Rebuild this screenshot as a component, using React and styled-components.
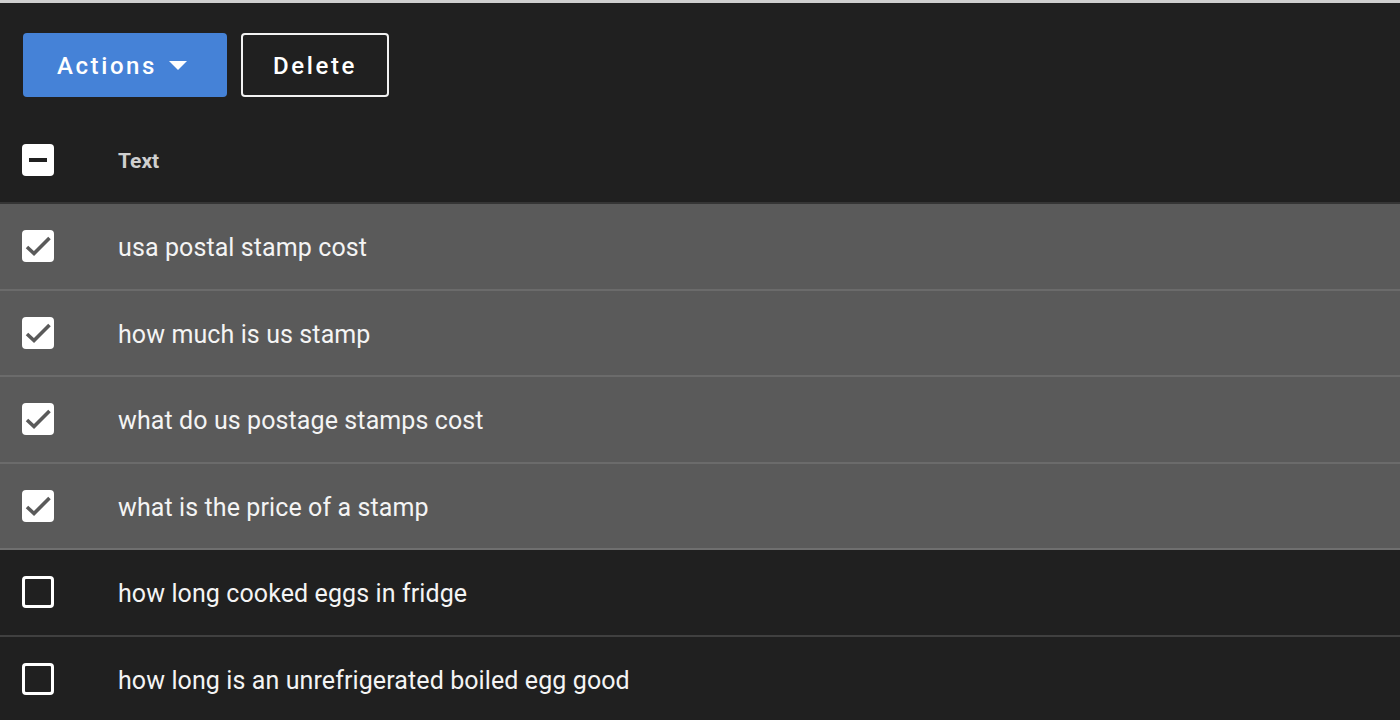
import React from 'react'
import styled, {createGlobalStyle} from 'styled-components'

const GlobalStyle = createGlobalStyle`
  html, body {
    margin: 0;
    padding: 0;
    background: #202020;
  }
  body {
    font-family: Roboto, "Noto Sans", "Liberation Sans", sans-serif;
    color: #fff;
  }
`

const rows = [
  {text: 'usa postal stamp cost', checked: true},
  {text: 'how much is us stamp', checked: true},
  {text: 'what do us postage stamps cost', checked: true},
  {text: 'what is the price of a stamp', checked: true},
  {text: 'how long cooked eggs in fridge', checked: false},
  {text: 'how long is an unrefrigerated boiled egg good', checked: false},
]

const Checkbox = ({state}) => {
  if (state === 'checked') {
    return (
      <Box $filled>
        <svg width='32' height='32' viewBox='0 0 32 32'>
          <path d='M5 17l7 6.5 15.5-15.5' fill='none' stroke='#5a5a5a' strokeWidth='3.6'/>
        </svg>
      </Box>
    )
  }
  if (state === 'indeterminate') {
    return (
      <Box $filled>
        <Dash/>
      </Box>
    )
  }
  return <Box/>
}

const App = () => {
  return (
    <Page>
      <GlobalStyle/>
      <Toolbar>
        <PrimaryButton type='button'>
          Actions
          <Caret/>
        </PrimaryButton>
        <OutlineButton type='button'>Delete</OutlineButton>
      </Toolbar>
      <Table>
        <HeaderRow>
          <CheckCell><Checkbox state='indeterminate'/></CheckCell>
          <HeaderLabel>Text</HeaderLabel>
        </HeaderRow>
        {rows.map((row, index) => {
          const nextChecked = rows[index + 1] && rows[index + 1].checked
          return (
            <Row key={index} $selected={row.checked} $edge={row.checked && !nextChecked}>
              <CheckCell><Checkbox state={row.checked ? 'checked' : 'empty'}/></CheckCell>
              <RowText>{row.text}</RowText>
            </Row>
          )
        })}
      </Table>
    </Page>
  )
}

const Page = styled.div `
  min-height: 720px;
  border-top: 3px solid #cfcfcf;
  background: #202020;
  box-sizing: border-box;
  overflow: hidden;
`

const Toolbar = styled.div `
  display: flex;
  align-items: center;
  gap: 14px;
  padding: 30px 23px 0;
  height: 64px;
`

const ButtonBase = styled.button `
  height: 64px;
  box-sizing: border-box;
  font-family: Roboto, "Liberation Sans", sans-serif;
  font-size: 24px;
  font-weight: 500;
  letter-spacing: 2.6px;
  color: #fff;
  border-radius: 4px;
  display: flex;
  align-items: center;
  justify-content: center;
  cursor: pointer;
  padding-top: 2px;
`

const PrimaryButton = styled(ButtonBase) `
  width: 204px;
  background: #4582d7;
  border: none;
  gap: 12px;
  padding-left: 0;
  padding-right: 6px;
`

const Caret = styled.span `
  width: 0;
  height: 0;
  border-left: 9.5px solid transparent;
  border-right: 9.5px solid transparent;
  border-top: 9px solid #fff;
  margin-top: -1px;
`

const OutlineButton = styled(ButtonBase) `
  width: 148px;
  background: transparent;
  border: 2px solid #f2f2f2;
`

const Table = styled.div `
  margin-top: 21px;
`

const HeaderRow = styled.div `
  display: flex;
  align-items: center;
  height: 84px;
  border-bottom: 2px solid #353535;
`

const Row = styled.div `
  display: flex;
  align-items: center;
  height: 84.5px;
  background: ${p => p.$selected ? '#5a5a5a' : '#202020'};
  border-bottom: 2px solid ${p => p.$edge ? '#6f6f6f' : p.$selected ? '#6b6b6b' : '#404040'};
`

const CheckCell = styled.div `
  width: 96px;
  padding-left: 22px;
  display: flex;
  align-items: center;
`

const Box = styled.div `
  width: 32px;
  height: 32px;
  box-sizing: border-box;
  border-radius: 4px;
  background: ${p => p.$filled ? '#ffffff' : 'transparent'};
  border: ${p => p.$filled ? 'none' : '3px solid #ffffff'};
  display: flex;
  align-items: center;
  justify-content: center;
`

const Dash = styled.span `
  width: 18px;
  height: 4px;
  background: #202020;
`

const HeaderLabel = styled.div `
  font-size: 21px;
  font-weight: 700;
  color: #cfcfcf;
  padding-top: 2px;
`

const RowText = styled.div `
  font-size: 25px;
  color: #f4f4f4;
  letter-spacing: 0.1px;
  padding-top: 3px;
`

export default App
